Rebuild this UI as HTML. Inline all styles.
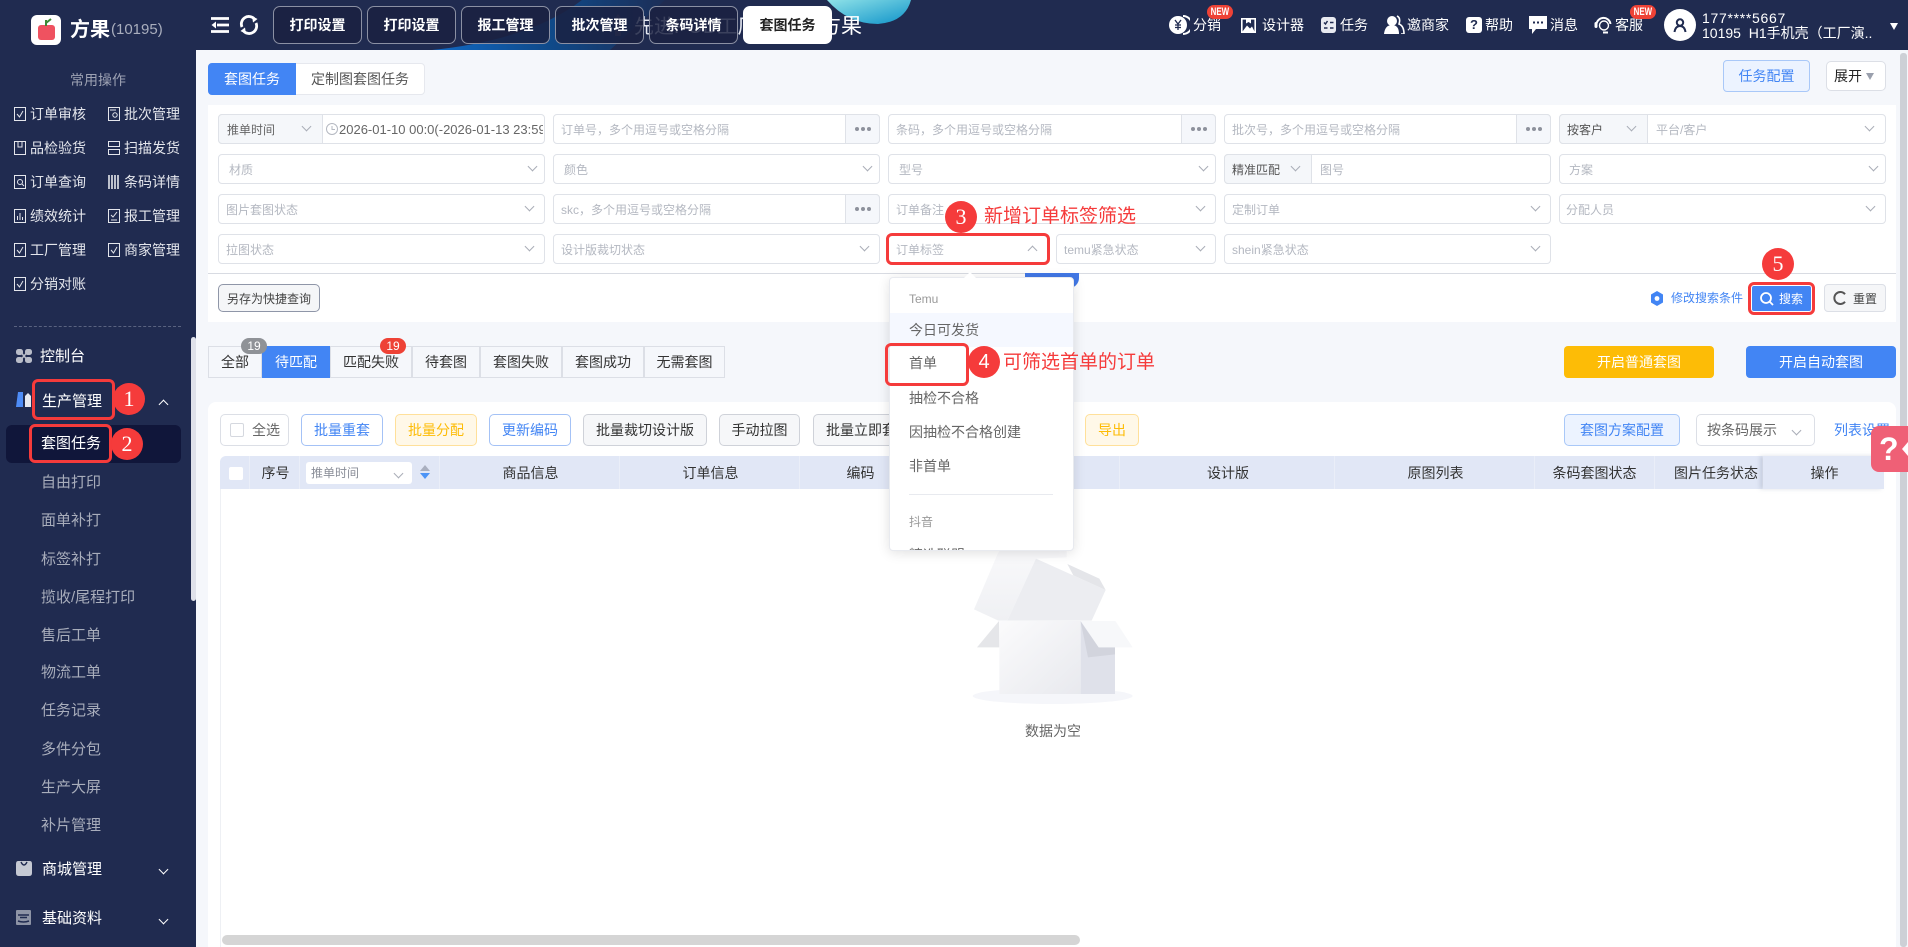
<!DOCTYPE html>
<html lang="zh-CN">
<head>
<meta charset="utf-8">
<title>套图任务</title>
<style>
*{box-sizing:border-box}
html,body{margin:0;padding:0;width:1908px;height:947px;overflow:hidden;background:#f5f7fb;font-family:"Liberation Sans","Noto Sans CJK SC",sans-serif;color:#333}
.a{position:absolute}
.t{position:absolute;white-space:nowrap;line-height:20px;height:20px}
.b{position:absolute;display:flex;align-items:center;justify-content:center;white-space:nowrap;font-size:14px;border-radius:4px;border:1px solid #dcdfe6;background:#fff}
.tab{top:6px;height:38px;width:89px;border:1px solid #8b90a3;border-radius:7px;background:rgba(26,32,64,.84);color:#fff;font-weight:700;font-size:14px;z-index:3}
.f{position:absolute;height:30px;border:1px solid #dfe2e8;border-radius:4px;background:#fff}
.ph{position:absolute;white-space:nowrap;line-height:20px;height:20px;font-size:12px;color:#b4b8c1;margin-top:1px}
.fx{margin-top:1px}
.pre{position:absolute;height:30px;background:#f5f7fa;border:1px solid #dfe2e8;border-radius:4px 0 0 4px}
.dots{position:absolute;height:30px;width:35px;background:#f5f7fb;border:1px solid #dfe2e8;border-radius:0 4px 4px 0;display:flex;align-items:center;justify-content:center}
.dots i{display:block;width:4px;height:4px;border-radius:50%;background:#8d919c;margin:0 1px}
.cv{position:absolute;width:7px;height:7px;border-right:1px solid #a9adb7;border-bottom:1px solid #a9adb7;transform:rotate(45deg)}
.up{transform:rotate(225deg)}
.wh{border-color:#e8eaf0}
.q{font-size:14px;color:#e4e6ec}
.m{font-size:15px;color:#a8adbb;left:41px}
.h{font-size:14px;color:#fff}
.new{position:absolute;top:5px;width:26px;height:14px;background:#ee4236;border-radius:8px;color:#fff;font-size:11px;font-weight:700;line-height:14px;text-align:center;z-index:4}
.new span{display:inline-block;transform:scaleX(.72)}
.red{position:absolute;border:3px solid #f53b3b;border-radius:6px;z-index:20}
.n{position:absolute;width:32px;height:32px;border-radius:50%;background:#f53b3b;color:#fff;font-family:"Liberation Serif",serif;font-size:22px;line-height:32px;text-align:center;z-index:21}
.red-t{position:absolute;white-space:nowrap;color:#f53b3b;font-size:19px;line-height:24px;z-index:21}
.st{position:absolute;top:346px;height:32px;border:1px solid #dcdfe6;margin-left:-1px;display:flex;align-items:center;justify-content:center;font-size:14px;color:#333}
.bad{position:absolute;top:338px;width:26px;height:16px;border-radius:8px;color:#fff;font-size:12px;line-height:16px;text-align:center;z-index:2}
.th{position:absolute;top:456px;height:33px;display:flex;align-items:center;justify-content:center;font-size:14px;color:#333;border-right:1px solid #eaeef8;padding-left:2px}
.dd{position:absolute;left:909px;white-space:nowrap;line-height:20px;height:20px;font-size:14px;color:#666}
</style>
</head>
<body>
<!-- header -->
<div class="a" style="left:0;top:0;width:1908px;height:50px;background:#202b50"></div>
<svg class="a" style="left:0;top:0;z-index:1" width="1908" height="50" viewBox="0 0 1908 50">
<defs>
<linearGradient id="sw" x1="0" y1="0" x2="1" y2="0"><stop offset="0" stop-color="#1169c4"/><stop offset=".5" stop-color="#0f4a8a"/><stop offset="1" stop-color="#1c2e57"/></linearGradient>
<linearGradient id="bl" x1="0" y1="0" x2="1" y2="1"><stop offset="0" stop-color="#8fe2e8"/><stop offset="1" stop-color="#0f93c9"/></linearGradient>
</defs>
<path d="M432 50 Q530 40 582 0 L665 0 L610 50 Z" fill="url(#sw)"/>
<path d="M827 0 Q848 24 878 24 Q905 22 911 0 Z" fill="url(#bl)"/>
<path d="M618 14L625 24H621V36H615V24H611Z" fill="#4a5373"/>
</svg>
<div class="t" style="left:634px;top:15px;font-size:20px;line-height:24px;height:24px;color:#e6e9f2;z-index:2">先进POD工厂</div>
<div class="t" style="left:820px;top:15px;font-size:21px;line-height:24px;height:24px;color:#fff;z-index:2">方果</div>

<div class="a" style="left:31px;top:15px;width:30px;height:30px;background:#fff;border-radius:6px;z-index:2"></div>
<svg class="a" style="left:31px;top:15px;z-index:3" width="30" height="30" viewBox="0 0 30 30"><rect x="7" y="10" width="17" height="15" rx="3" fill="#ef5260"/><path d="M15 11V5M15 8 L20 4" stroke="#3d8a35" stroke-width="2" fill="none"/></svg>
<div class="t" style="left:70px;top:18px;font-size:20px;font-weight:700;color:#fff;line-height:24px;height:24px">方果</div>
<div class="t" style="left:111px;top:20px;font-size:15px;color:#a9aebd">(10195)</div>

<svg class="a" style="left:211px;top:17px;z-index:3" width="18" height="16" viewBox="0 0 18 16"><path d="M0 1.5H18M6 8H18M0 14.5H18" stroke="#fff" stroke-width="2.8"/><path d="M5 4.5L0.5 8L5 11.5Z" fill="#fff"/></svg>
<svg class="a" style="left:239px;top:15px;z-index:3" width="20" height="20" viewBox="0 0 20 20"><path d="M3 12A7.5 7.5 0 0 1 15 3.5M17 8A7.5 7.5 0 0 1 5 16.5" stroke="#fff" stroke-width="2.8" fill="none"/><path d="M13 1L18.5 4L14 7.5Z M7 19L1.5 16L6 12.5Z" fill="#fff"/></svg>

<div class="b tab" style="left:273px">打印设置</div>
<div class="b tab" style="left:367px">打印设置</div>
<div class="b tab" style="left:461px">报工管理</div>
<div class="b tab" style="left:555px">批次管理</div>
<div class="b tab" style="left:649px">条码详情</div>
<div class="b tab" style="left:743px;background:#fff;color:#222;border-color:#fff">套图任务</div>

<!-- header right -->
<svg class="a" style="left:1168px;top:15px;z-index:3" width="22" height="20" viewBox="0 0 22 20"><path d="M15 1A9 9 0 0 1 15 19" stroke="#fff" stroke-width="2" fill="none"/><circle cx="10" cy="10" r="9" fill="#fff"/><path d="M7 5L10 9L13 5M10 9V15M7 10H13M7 12.5H13" stroke="#202b50" stroke-width="1.3" fill="none"/></svg>
<div class="t h" style="left:1193px;top:15px">分销</div><div class="new" style="left:1207px"><span>NEW</span></div>
<svg class="a" style="left:1241px;top:18px" width="15" height="15" viewBox="0 0 15 15"><rect x=".8" y=".8" width="13.4" height="13.4" fill="none" stroke="#fff" stroke-width="1.6"/><path d="M1.5 13.5L6 7.5L9 10.5L11 8.5L13.5 13.5ZM5 1.5H10V5.5L7.5 4L5 5.5Z" fill="#fff"/></svg>
<div class="t h" style="left:1262px;top:15px">设计器</div>
<svg class="a" style="left:1321px;top:17px" width="15" height="16" viewBox="0 0 15 16"><rect width="15" height="16" rx="3" fill="#e8eaf0"/><path d="M3 5.5L4.5 7L6.5 4M9 5.5H12.5M3 11H6.5M9 11H12.5" stroke="#202b50" stroke-width="1.5" fill="none"/></svg>
<div class="t h" style="left:1340px;top:15px">任务</div>
<svg class="a" style="left:1384px;top:15px" width="21" height="19" viewBox="0 0 21 19"><circle cx="8" cy="6" r="5" fill="#fff"/><path d="M0 19Q1 10 8 10Q15 10 15 19Z" fill="#fff"/><path d="M13 1Q17 3 15 9Q20 11 20 19H17" stroke="#fff" stroke-width="1.6" fill="none"/></svg>
<div class="t h" style="left:1407px;top:15px">邀商家</div>
<div class="a" style="left:1466px;top:17px;width:16px;height:16px;border-radius:3px;background:#fff;color:#202b50;font-size:13px;font-weight:700;line-height:16px;text-align:center">?</div>
<div class="t h" style="left:1485px;top:15px">帮助</div>
<svg class="a" style="left:1529px;top:16px" width="18" height="18" viewBox="0 0 18 18"><path d="M0 0H18V13H7L3 18V13H0Z" fill="#fff"/><path d="M4 6.5H6M8 6.5H10M12 6.5H14" stroke="#202b50" stroke-width="2"/></svg>
<div class="t h" style="left:1550px;top:15px">消息</div>
<svg class="a" style="left:1594px;top:16px" width="18" height="18" viewBox="0 0 18 18"><path d="M2.5 10A7 7 0 1 1 16.5 8" fill="none" stroke="#fff" stroke-width="2"/><circle cx="10" cy="9.5" r="4.5" fill="none" stroke="#fff" stroke-width="1.4"/><rect x="0.5" y="6" width="3" height="6" rx="1.5" fill="#fff"/><path d="M9 16.5H14" stroke="#fff" stroke-width="2"/></svg>
<div class="t h" style="left:1615px;top:15px">客服</div><div class="new" style="left:1630px"><span>NEW</span></div>
<div class="a" style="left:1664px;top:9px;width:32px;height:32px;border-radius:50%;background:#fff"></div>
<svg class="a" style="left:1672px;top:17px" width="16" height="16" viewBox="0 0 16 16"><circle cx="8" cy="5.5" r="3.2" fill="none" stroke="#202b50" stroke-width="2"/><path d="M2.5 15Q3.5 9 8 9Q12.5 9 13.5 15" fill="none" stroke="#202b50" stroke-width="2"/></svg>
<div class="t" style="left:1702px;top:8px;font-size:14px;color:#fff;letter-spacing:.7px">177****5667</div>
<div class="t" style="left:1702px;top:23px;font-size:14px;color:#fff;width:170px;overflow:hidden;white-space:pre">10195  H1手机壳（工厂演...</div>
<div class="a" style="left:1890px;top:23px;width:0;height:0;border-left:4.5px solid transparent;border-right:4.5px solid transparent;border-top:7px solid #fff"></div>

<!-- sidebar -->
<div class="a" style="left:0;top:50px;width:196px;height:897px;background:#202b50"></div>
<div class="a" style="left:191px;top:337px;width:5px;height:264px;background:#dfe1ea;border-radius:3px"></div>
<div class="t" style="left:70px;top:70px;font-size:14px;color:#9da2b3">常用操作</div>

<svg class="a" style="left:14px;top:107px" width="12" height="14" viewBox="0 0 12 14"><rect x=".5" y=".5" width="11" height="13" fill="none" stroke="#e4e6ec"/><path d="M3 7L5.5 10L9 4" stroke="#e4e6ec" fill="none"/></svg>
<div class="t q" style="left:30px;top:104px">订单审核</div>
<svg class="a" style="left:108px;top:107px" width="12" height="14" viewBox="0 0 12 14"><rect x=".5" y=".5" width="11" height="13" fill="none" stroke="#e4e6ec"/><circle cx="7" cy="8" r="2.2" fill="none" stroke="#e4e6ec"/><path d="M2 3H8" stroke="#e4e6ec"/></svg>
<div class="t q" style="left:124px;top:104px">批次管理</div>
<svg class="a" style="left:14px;top:141px" width="12" height="14" viewBox="0 0 12 14"><path d="M.5 .5H11.5V13.5H.5ZM4 .5V6H8V.5" fill="none" stroke="#e4e6ec"/></svg>
<div class="t q" style="left:30px;top:138px">品检验货</div>
<svg class="a" style="left:108px;top:141px" width="12" height="14" viewBox="0 0 12 14"><path d="M.5 .5H11.5V5.5H.5ZM.5 8.5H11.5V13.5H.5Z" fill="none" stroke="#e4e6ec"/></svg>
<div class="t q" style="left:124px;top:138px">扫描发货</div>
<svg class="a" style="left:14px;top:175px" width="12" height="14" viewBox="0 0 12 14"><rect x=".5" y=".5" width="11" height="13" fill="none" stroke="#e4e6ec"/><circle cx="6" cy="7" r="2.5" fill="none" stroke="#e4e6ec"/><path d="M8 9L10 11" stroke="#e4e6ec"/></svg>
<div class="t q" style="left:30px;top:172px">订单查询</div>
<svg class="a" style="left:108px;top:175px" width="12" height="14" viewBox="0 0 12 14"><path d="M1 0V14M4 0V14M7 0V14M10 0V14" stroke="#e4e6ec" stroke-width="1.6"/></svg>
<div class="t q" style="left:124px;top:172px">条码详情</div>
<svg class="a" style="left:14px;top:209px" width="12" height="14" viewBox="0 0 12 14"><rect x=".5" y=".5" width="11" height="13" fill="none" stroke="#e4e6ec"/><path d="M3.5 11V7M6 11V4M8.5 11V8" stroke="#e4e6ec"/></svg>
<div class="t q" style="left:30px;top:206px">绩效统计</div>
<svg class="a" style="left:108px;top:209px" width="12" height="14" viewBox="0 0 12 14"><rect x=".5" y=".5" width="11" height="13" fill="none" stroke="#e4e6ec"/><path d="M3 6L5 8L9 3M3 11H9" stroke="#e4e6ec" fill="none"/></svg>
<div class="t q" style="left:124px;top:206px">报工管理</div>
<svg class="a" style="left:14px;top:243px" width="12" height="14" viewBox="0 0 12 14"><rect x=".5" y=".5" width="11" height="13" fill="none" stroke="#e4e6ec"/><path d="M3 7L5.5 10L9 4" stroke="#e4e6ec" fill="none"/></svg>
<div class="t q" style="left:30px;top:240px">工厂管理</div>
<svg class="a" style="left:108px;top:243px" width="12" height="14" viewBox="0 0 12 14"><rect x=".5" y=".5" width="11" height="13" fill="none" stroke="#e4e6ec"/><path d="M3 7L5.5 10L9 4" stroke="#e4e6ec" fill="none"/></svg>
<div class="t q" style="left:124px;top:240px">商家管理</div>
<svg class="a" style="left:14px;top:277px" width="12" height="14" viewBox="0 0 12 14"><rect x=".5" y=".5" width="11" height="13" fill="none" stroke="#e4e6ec"/><path d="M3 7L5.5 10L9 4" stroke="#e4e6ec" fill="none"/></svg>
<div class="t q" style="left:30px;top:274px">分销对账</div>

<div class="a" style="left:14px;top:326px;width:167px;border-top:1px dashed #5a6380"></div>

<svg class="a" style="left:16px;top:349px" width="16" height="14" viewBox="0 0 16 14"><path d="M8 7L3 1M8 7L13 1M8 7L3 13M8 7L13 13" stroke="#b9bdc9" stroke-width="1.5"/><rect x="0" y="0" width="7" height="6" rx="2.5" fill="#b9bdc9"/><rect x="9" y="0" width="7" height="6" rx="2.5" fill="#b9bdc9"/><rect x="0" y="8" width="7" height="6" rx="2.5" fill="#b9bdc9"/><rect x="9" y="8" width="7" height="6" rx="2.5" fill="#b9bdc9"/></svg>
<div class="t" style="left:40px;top:347px;font-size:15px;color:#fff">控制台</div>
<svg class="a" style="left:16px;top:392px" width="16" height="15" viewBox="0 0 16 15"><path d="M0 15L2 0H7V15Z" fill="#4e8cf6"/><path d="M9 15V4L12 1L15 4V15Z" fill="#e8eaf0"/></svg>
<div class="t" style="left:42px;top:392px;font-size:15px;color:#fff">生产管理</div>
<div class="cv up wh" style="left:159.5px;top:401px;border-color:#fff"></div>
<div class="a" style="left:6px;top:425px;width:175px;height:38px;background:#10163a;border-radius:6px"></div>
<div class="t" style="left:41px;top:434px;font-size:15px;color:#fff">套图任务</div>
<div class="t m" style="top:473px">自由打印</div>
<div class="t m" style="top:511px">面单补打</div>
<div class="t m" style="top:550px">标签补打</div>
<div class="t m" style="top:588px">揽收/尾程打印</div>
<div class="t m" style="top:626px">售后工单</div>
<div class="t m" style="top:663px">物流工单</div>
<div class="t m" style="top:701px">任务记录</div>
<div class="t m" style="top:740px">多件分包</div>
<div class="t m" style="top:778px">生产大屏</div>
<div class="t m" style="top:816px">补片管理</div>
<svg class="a" style="left:16px;top:860px" width="16" height="16" viewBox="0 0 16 16"><path d="M2 1H14Q16 1 16 4V13Q16 16 13 16H3Q0 16 0 13V4Q0 1 2 1Z" fill="#c5c9d3"/><path d="M5 2Q8 8 11 2" stroke="#202b50" stroke-width="1.4" fill="none"/></svg>
<div class="t" style="left:42px;top:860px;font-size:15px;color:#fff">商城管理</div>
<div class="cv wh" style="left:159.5px;top:866px;border-color:#fff"></div>
<svg class="a" style="left:16px;top:910px" width="15" height="15" viewBox="0 0 15 15"><rect width="15" height="15" rx="1" fill="#8e94a6"/><path d="M2 5H13M4 7.5H11M2 11Q7.5 13 13 11" stroke="#202b50" stroke-width="1.5" fill="none"/></svg>
<div class="t" style="left:42px;top:909px;font-size:15px;color:#fff">基础资料</div>
<div class="cv wh" style="left:159.5px;top:916px;border-color:#fff"></div>

<!-- right scrollbar -->
<div class="a" style="left:1900px;top:53px;width:7px;height:894px;background:#cdd0d6;border-radius:3px"></div>

<!-- sub tabs -->
<div class="b" style="left:208px;top:63px;width:217px;height:32px;border-color:#e6e8ee"></div>
<div class="b" style="left:208px;top:63px;width:88px;height:32px;background:#4285f4;border-color:#4285f4;color:#fff;border-radius:4px 0 0 4px">套图任务</div>
<div class="t" style="left:311px;top:69px;font-size:14px;color:#555">定制图套图任务</div>
<div class="b" style="left:1723px;top:60px;width:87px;height:32px;background:#ecf3ff;border-color:#a9c8f8;color:#4285f4">任务配置</div>
<div class="b" style="left:1826px;top:61px;width:60px;height:30px;color:#222;justify-content:flex-start;padding-left:7px;border-radius:5px">展开<span style="display:inline-block;margin-left:4px;border-left:4.5px solid transparent;border-right:4.5px solid transparent;border-top:7px solid #9aa0ad"></span></div>

<!-- filter panel -->
<div class="a" style="left:208px;top:105px;width:1688px;height:217px;background:#fff"></div>
<div class="a" style="left:208px;top:273px;width:1688px;height:1px;background:#d8dbe2"></div>

<!-- row1 -->
<div class="f" style="left:218px;top:114px;width:327px"></div>
<div class="pre" style="left:218px;top:114px;width:105px"></div>
<div class="t fx" style="left:227px;top:119px;font-size:12px;color:#666">推单时间</div>
<div class="cv" style="left:303px;top:123px"></div>
<svg class="a" style="left:326px;top:123px" width="12" height="12" viewBox="0 0 12 12"><circle cx="6" cy="6" r="5.5" fill="none" stroke="#b4b8c1"/><path d="M6 3V6.5H9" stroke="#b4b8c1" fill="none"/></svg>
<div class="t fx" style="left:339px;top:119px;font-size:13px;color:#666;width:204px;overflow:hidden">2026-01-10 00:0(-2026-01-13 23:59</div>

<div class="f" style="left:553px;top:114px;width:327px"></div>
<div class="ph" style="left:561px;top:119px">订单号，多个用逗号或空格分隔</div>
<div class="dots" style="left:845px;top:114px"><i></i><i></i><i></i></div>
<div class="f" style="left:888px;top:114px;width:328px"></div>
<div class="ph" style="left:896px;top:119px">条码，多个用逗号或空格分隔</div>
<div class="dots" style="left:1181px;top:114px"><i></i><i></i><i></i></div>
<div class="f" style="left:1224px;top:114px;width:327px"></div>
<div class="ph" style="left:1232px;top:119px">批次号，多个用逗号或空格分隔</div>
<div class="dots" style="left:1516px;top:114px"><i></i><i></i><i></i></div>
<div class="f" style="left:1559px;top:114px;width:327px"></div>
<div class="pre" style="left:1559px;top:114px;width:89px"></div>
<div class="t fx" style="left:1567px;top:119px;font-size:12px;color:#555">按客户</div>
<div class="cv" style="left:1628px;top:123px"></div>
<div class="ph" style="left:1656px;top:119px">平台/客户</div>
<div class="cv" style="left:1866px;top:123px"></div>

<!-- row2 -->
<div class="f" style="left:218px;top:154px;width:327px"></div>
<div class="ph" style="left:229px;top:159px">材质</div>
<div class="cv" style="left:529px;top:163px"></div>
<div class="f" style="left:553px;top:154px;width:327px"></div>
<div class="ph" style="left:564px;top:159px">颜色</div>
<div class="cv" style="left:864px;top:163px"></div>
<div class="f" style="left:888px;top:154px;width:328px"></div>
<div class="ph" style="left:899px;top:159px">型号</div>
<div class="cv" style="left:1200px;top:163px"></div>
<div class="f" style="left:1224px;top:154px;width:327px"></div>
<div class="pre" style="left:1224px;top:154px;width:88px"></div>
<div class="t fx" style="left:1232px;top:159px;font-size:12px;color:#555">精准匹配</div>
<div class="cv" style="left:1292px;top:163px"></div>
<div class="ph" style="left:1320px;top:159px">图号</div>
<div class="f" style="left:1559px;top:154px;width:327px"></div>
<div class="ph" style="left:1569px;top:159px">方案</div>
<div class="cv" style="left:1870px;top:163px"></div>

<!-- row3 -->
<div class="f" style="left:218px;top:194px;width:327px"></div>
<div class="ph" style="left:226px;top:199px">图片套图状态</div>
<div class="cv" style="left:526px;top:203px"></div>
<div class="f" style="left:553px;top:194px;width:327px"></div>
<div class="ph" style="left:561px;top:199px">skc，多个用逗号或空格分隔</div>
<div class="dots" style="left:845px;top:194px"><i></i><i></i><i></i></div>
<div class="f" style="left:888px;top:194px;width:328px"></div>
<div class="ph" style="left:896px;top:199px">订单备注</div>
<div class="cv" style="left:1197px;top:203px"></div>
<div class="f" style="left:1224px;top:194px;width:327px"></div>
<div class="ph" style="left:1232px;top:199px">定制订单</div>
<div class="cv" style="left:1532px;top:203px"></div>
<div class="f" style="left:1559px;top:194px;width:327px"></div>
<div class="ph" style="left:1566px;top:199px">分配人员</div>
<div class="cv" style="left:1867px;top:203px"></div>

<!-- row4 -->
<div class="f" style="left:218px;top:234px;width:327px"></div>
<div class="ph" style="left:226px;top:239px">拉图状态</div>
<div class="cv" style="left:526px;top:243px"></div>
<div class="f" style="left:553px;top:234px;width:327px"></div>
<div class="ph" style="left:561px;top:239px">设计版裁切状态</div>
<div class="cv" style="left:861px;top:243px"></div>
<div class="f" style="left:888px;top:234px;width:160px"></div>
<div class="ph" style="left:896px;top:239px">订单标签</div>
<div class="cv up" style="left:1029px;top:247px"></div>
<div class="f" style="left:1056px;top:234px;width:160px"></div>
<div class="ph" style="left:1064px;top:239px">temu紧急状态</div>
<div class="cv" style="left:1197px;top:243px"></div>
<div class="f" style="left:1224px;top:234px;width:327px"></div>
<div class="ph" style="left:1232px;top:239px">shein紧急状态</div>
<div class="cv" style="left:1532px;top:243px"></div>

<!-- action row -->
<div class="b" style="left:218px;top:284px;width:102px;height:28px;background:#f5f6f8;border-color:#8f96a8;font-size:12px;color:#444;border-radius:5px">另存为快捷查询</div>
<svg class="a" style="left:1650px;top:291px" width="14" height="15" viewBox="0 0 14 15"><path d="M7 0L13 3.5V11.5L7 15L1 11.5V3.5Z" fill="#4285f4"/><circle cx="7" cy="7.5" r="2.4" fill="#fff"/></svg>
<div class="t" style="left:1671px;top:288px;font-size:12px;color:#4285f4">修改搜索条件</div>
<div class="b" style="left:1752px;top:286px;width:59px;height:25px;background:#4285f4;border:0;color:#fff;font-size:12px;border-radius:2px"><svg width="14" height="14" viewBox="0 0 14 14" style="margin-right:5px"><circle cx="6" cy="6" r="5" fill="none" stroke="#fff" stroke-width="1.8"/><path d="M9.5 9.5L13 13" stroke="#fff" stroke-width="1.8"/></svg>搜索</div>
<div class="b" style="left:1824px;top:284px;width:62px;height:28px;background:#f5f6f8;font-size:12px;color:#444;border-radius:4px"><svg width="14" height="14" viewBox="0 0 14 14" style="margin-right:6px"><path d="M12 3.2A6 6 0 1 0 12 10.8" fill="none" stroke="#555" stroke-width="2"/></svg>重置</div>

<div class="a" style="left:1025px;top:273px;width:54px;height:15px;background:#4278e6;border-radius:0 0 10px 0"></div>

<!-- status tabs -->
<div class="st" style="left:209px;width:54px">全部</div>
<div class="st" style="left:263px;width:68px;background:#4285f4;color:#fff;border-color:#4285f4">待匹配</div>
<div class="st" style="left:331px;width:82px">匹配失败</div>
<div class="st" style="left:413px;width:68px">待套图</div>
<div class="st" style="left:481px;width:82px">套图失败</div>
<div class="st" style="left:563px;width:82px">套图成功</div>
<div class="st" style="left:645px;width:81px">无需套图</div>
<div class="bad" style="left:241px;background:#8f9297">19</div>
<div class="bad" style="left:380px;background:#ee4236">19</div>
<div class="b" style="left:1564px;top:346px;width:150px;height:32px;background:#fdbc06;border:0;color:#fff">开启普通套图</div>
<div class="b" style="left:1746px;top:346px;width:150px;height:32px;background:#4285f4;border:0;color:#fff">开启自动套图</div>

<!-- table card -->
<div class="a" style="left:208px;top:402px;width:1688px;height:545px;background:#fff;border-radius:8px 8px 0 0"></div>
<div class="b" style="left:220px;top:414px;width:69px;height:32px;justify-content:flex-start;padding-left:9px;color:#666;border-radius:5px"><span style="display:inline-block;width:14px;height:14px;border:1px solid #d5d8df;border-radius:2px;margin-right:8px"></span>全选</div>
<div class="b" style="left:301px;top:414px;width:82px;height:32px;border-color:#a4c2f6;color:#4285f4;border-radius:5px">批量重套</div>
<div class="b" style="left:395px;top:414px;width:82px;height:32px;background:#fff8e8;border-color:#ffe09a;color:#fdbc06;border-radius:5px">批量分配</div>
<div class="b" style="left:489px;top:414px;width:82px;height:32px;border-color:#a4c2f6;color:#4285f4;border-radius:5px">更新编码</div>
<div class="b" style="left:583px;top:414px;width:124px;height:32px;background:#f6f7f9;border-color:#cfd2d9;border-radius:5px">批量裁切设计版</div>
<div class="b" style="left:719px;top:414px;width:81px;height:32px;background:#f6f7f9;border-color:#cfd2d9;border-radius:5px">手动拉图</div>
<div class="b" style="left:813px;top:414px;width:110px;height:32px;background:#f6f7f9;border-color:#cfd2d9;border-radius:5px;justify-content:flex-start;padding-left:12px">批量立即套图</div>
<div class="b" style="left:1085px;top:414px;width:54px;height:32px;background:#fff8e8;border-color:#ffe09a;color:#fdbc06;border-radius:5px">导出</div>
<div class="b" style="left:1564px;top:414px;width:116px;height:32px;background:#ecf3ff;border-color:#a9c8f8;color:#4285f4;border-radius:5px">套图方案配置</div>
<div class="b" style="left:1696px;top:414px;width:119px;height:32px;justify-content:flex-start;padding-left:10px;color:#666;border-radius:5px">按条码展示</div>
<div class="cv" style="left:1793px;top:427px"></div>
<div class="t" style="left:1834px;top:420px;font-size:14px;color:#4285f4">列表设置</div>

<!-- table head -->
<div class="a" style="left:220px;top:456px;width:1664px;height:33px;background:#e1e7f6;border-radius:6px 0 0 0"></div>
<div class="th" style="left:220px;width:30px"></div>
<div class="a" style="left:229px;top:467px;width:14px;height:13px;background:#fff;border-radius:2px"></div>
<div class="th" style="left:250px;width:50px">序号</div>
<div class="th" style="left:300px;width:140px"></div>
<div class="a" style="left:306px;top:462px;width:106px;height:22px;background:#fff;border-radius:3px"></div>
<div class="t" style="left:311px;top:463px;font-size:12px;color:#8a8e98">推单时间</div>
<div class="cv" style="left:395px;top:470px"></div>
<div class="a" style="left:420px;top:465px;width:0;height:0;border-left:5px solid transparent;border-right:5px solid transparent;border-bottom:6px solid #a9afbf"></div>
<div class="a" style="left:420px;top:473px;width:0;height:0;border-left:5px solid transparent;border-right:5px solid transparent;border-top:6px solid #4c94f6"></div>
<div class="th" style="left:440px;width:180px">商品信息</div>
<div class="th" style="left:620px;width:180px">订单信息</div>
<div class="th" style="left:800px;width:120px">编码</div>
<div class="th" style="left:920px;width:200px"></div>
<div class="th" style="left:1120px;width:215px">设计版</div>
<div class="th" style="left:1335px;width:200px">原图列表</div>
<div class="th" style="left:1535px;width:120px;padding-left:0">条码套图状态</div>
<div class="th" style="left:1655px;width:108px;justify-content:flex-start;padding-left:19px;white-space:nowrap;overflow:hidden">图片任务状态</div>
<div class="th" style="left:1763px;width:121px;border-right:0;box-shadow:-3px 0 4px rgba(120,130,160,.25);background:#e1e7f6">操作</div>

<div class="a" style="left:220px;top:489px;width:1px;height:458px;background:#eef0f4"></div>
<div class="a" style="left:222px;top:935px;width:858px;height:10px;background:#d5d5d5;border-radius:5px"></div>

<!-- empty state -->
<svg class="a" style="left:860px;top:500px" width="400" height="260" viewBox="0 0 1200 780">
<defs>
<linearGradient id="fr" x1="0" y1="0" x2="1" y2="1"><stop offset="0" stop-color="#fbfbfc"/><stop offset="1" stop-color="#e8e9ee"/></linearGradient>
<linearGradient id="ld" x1="0" y1="0" x2="0" y2="1"><stop offset="0" stop-color="#f9f9fb"/><stop offset="1" stop-color="#eff0f3"/></linearGradient>
</defs>
<ellipse cx="578" cy="588" rx="240" ry="24" fill="#f5f6fa"/>
<path d="M342 328L414 159L420 150L620 150L620 172L528 176L442 362L415 362Z" fill="url(#ld)"/>
<path d="M528 176L737 270L695 362L442 362Z" fill="#ecedf1"/>
<path d="M622 192L718 236L737 270L640 226Z" fill="#e4e5e9"/>
<path d="M417 363L351 442L418 442Z" fill="#e5e6e9"/>
<rect x="418" y="363" width="244" height="219" fill="url(#fr)"/>
<rect x="662" y="363" width="103" height="219" fill="#dfe1ea"/>
<path d="M662 365L716 442L765 442L765 463L684 472Z" fill="#d2d4dd"/>
<path d="M662 363L766 363L818 442L716 442Z" fill="#f7f8fa"/>
</svg>
<div class="t" style="left:1025px;top:721px;font-size:14px;color:#666">数据为空</div>

<!-- help tab -->
<div class="a" style="left:1871px;top:426px;width:37px;height:46px;background:#ef6076;border-radius:8px 0 0 8px;z-index:5"></div>
<div class="t" style="left:1879px;top:433px;font-size:32px;font-weight:700;color:#fff;line-height:32px;height:32px;z-index:6">?</div>
<div class="a" style="left:1902px;top:442px;width:0;height:0;border-top:7px solid transparent;border-bottom:7px solid transparent;border-right:6px solid #fff;z-index:6"></div>

<!-- dropdown -->
<div class="a" style="left:964px;top:272px;width:0;height:0;border-left:6px solid transparent;border-right:6px solid transparent;border-bottom:6px solid #fff;z-index:10"></div>
<div class="a" style="left:889px;top:277px;width:185px;height:274px;background:#fff;border:1px solid #e8eaef;border-radius:4px;box-shadow:0 2px 12px rgba(0,0,0,.12);z-index:9;overflow:hidden">
  <div class="a" style="left:0;top:35px;width:185px;height:34px;background:#f5f8ff"></div>
  <div class="dd" style="left:19px;top:11px;font-size:12px;color:#999">Temu</div>
  <div class="dd" style="left:19px;top:42px">今日可发货</div>
  <div class="dd" style="left:19px;top:75px">首单</div>
  <div class="dd" style="left:19px;top:110px">抽检不合格</div>
  <div class="dd" style="left:19px;top:144px">因抽检不合格创建</div>
  <div class="dd" style="left:19px;top:178px">非首单</div>
  <div class="a" style="left:19px;top:216px;width:144px;height:1px;background:#e8eaef"></div>
  <div class="dd" style="left:19px;top:234px;font-size:12px;color:#999">抖音</div>
  <div class="dd" style="left:19px;top:267px">精选联盟</div>
</div>

<!-- annotations -->
<div class="red" style="left:32px;top:379px;width:83px;height:41px"></div>
<div class="n" style="left:113px;top:383px">1</div>
<div class="red" style="left:29px;top:424px;width:83px;height:39px"></div>
<div class="n" style="left:111px;top:428px">2</div>
<div class="red" style="left:886px;top:233px;width:164px;height:32px"></div>
<div class="n" style="left:945px;top:201px">3</div>
<div class="red-t" style="left:984px;top:205px">新增订单标签筛选</div>
<div class="red" style="left:885px;top:343px;width:84px;height:43px"></div>
<div class="n" style="left:968px;top:346px;font-family:'Liberation Sans',sans-serif;font-size:20px">4</div>
<div class="red-t" style="left:1003px;top:351px">可筛选首单的订单</div>
<div class="red" style="left:1748px;top:282px;width:67px;height:33px;background:transparent"></div>
<div class="n" style="left:1762px;top:248px">5</div>
</body>
</html>
